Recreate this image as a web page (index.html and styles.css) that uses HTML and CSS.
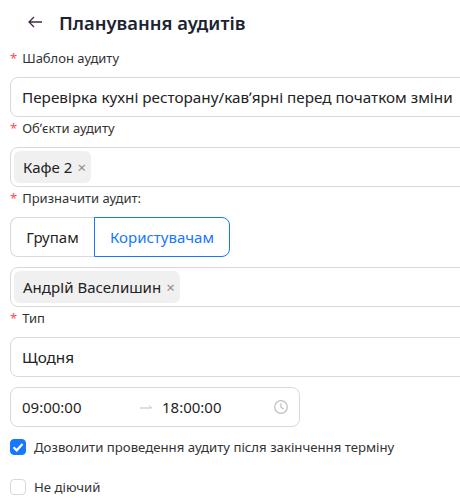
FILE: index.html
```html
<!DOCTYPE html>
<html lang="uk">
<head>
  <meta charset="UTF-8" />
  <title>Планування аудитів</title>
  <link rel="stylesheet" href="styles.css">
</head>
<body>

  <!-- Header -->
  <div class="page-header">
    <svg class="back-icon" viewBox="0 0 14 12" aria-hidden="true">
      <path d="M14 6H1M6 1 1 6l5 5" fill="none" stroke="currentColor" stroke-width="1.3"/>
    </svg>
    <h1>Планування аудитів</h1>
  </div>

  <!-- Form -->
  <div class="form">
    <div class="label">Шаблон аудиту</div>
    <div class="field">Перевірка кухні ресторану/кавʼярні перед початком зміни</div>

    <div class="label">Обʼєкти аудиту</div>
    <div class="field multi">
      <span class="tag">Кафе 2 <span class="tag-close">&times;</span></span>
    </div>

    <div class="label">Призначити аудит:</div>
    <div class="segmented">
      <div class="segment">Групам</div>
      <div class="segment active">Користувачам</div>
    </div>

    <div class="field multi spaced">
      <span class="tag">АндрІй Васелишин <span class="tag-close">&times;</span></span>
    </div>

    <div class="label">Тип</div>
    <div class="field">Щодня</div>

    <div class="time-range">
      <span class="time">09:00:00</span>
      <svg class="range-arrow" viewBox="0 0 12 8" aria-hidden="true">
        <path d="M0 5h11.5L9 2.5" fill="none" stroke="currentColor" stroke-width="1"/>
      </svg>
      <span class="time end">18:00:00</span>
      <svg class="clock-icon" viewBox="0 0 14 14" aria-hidden="true">
        <circle cx="7" cy="7" r="6.3" fill="none" stroke="currentColor" stroke-width="1.2"/>
        <path d="M7 3.2v4l2.6 1.7" fill="none" stroke="currentColor" stroke-width="1.2"/>
      </svg>
    </div>

    <div class="check-row">
      <span class="checkbox checked">
        <svg viewBox="0 0 14 14" aria-hidden="true">
          <path d="M2.5 7.2 5.7 10.3 11.5 4" fill="none" stroke="#fff" stroke-width="2.2"/>
        </svg>
      </span>
      Дозволити проведення аудиту після закінчення терміну
    </div>
    <div class="check-row">
      <span class="checkbox"></span>
      Не діючий
    </div>
  </div>

</body>
</html>
```

FILE: styles.css
```css
* { box-sizing: border-box; }
html, body {
  overflow: hidden;
}
body {
  margin: 0;
  width: 460px;
  height: 504px;
  font-family: 'Noto Sans', 'Open Sans', sans-serif;
  background: #fff;
  color: #1f1f1f;
}
.page-header {
  display: flex;
  align-items: center;
  height: 47px;
  padding: 0 0 3px 28px;
}
.back-icon {
  width: 14px;
  height: 12px;
  color: #3f2a45;
  margin-right: 17px;
}
.page-header h1 {
  margin: 0;
  font-size: 18.4px;
  font-weight: 600;
  color: #1c2430;
}
.form {
  width: 480px;
  padding-left: 10px;
}
.label {
  height: 30px;
  padding-top: 1px;
  font-size: 13px;
  line-height: 20px;
  color: #333;
}
.label::before {
  content: "*";
  color: #ff4d4f;
  margin-right: 5px;
}
.field {
  display: flex;
  align-items: center;
  height: 40px;
  padding: 0 11px;
  border: 1px solid #d9d9d9;
  border-radius: 8px;
  font-size: 15.27px;
  color: #222;
}
.field.multi {
  padding: 0 3px;
}
.field.spaced {
  margin-top: 10px;
}
.tag {
  display: inline-flex;
  align-items: center;
  height: 32px;
  padding: 0 5px 0 9px;
  background: #f0f0f0;
  border-radius: 6px;
  font-size: 15px;
}
.tag-close {
  margin-left: 5px;
  color: #8c8c8c;
  font-size: 15px;
}
.segmented {
  display: flex;
  width: 220px;
  height: 40px;
  font-size: 15px;
}
.segment {
  display: flex;
  align-items: center;
  justify-content: center;
  width: 84px;
  border: 1px solid #d9d9d9;
  border-right: none;
  border-radius: 8px 0 0 8px;
}
.segment.active {
  width: 136px;
  color: #1677ff;
  border: 1px solid #1677ff;
  border-radius: 0 8px 8px 0;
}
.time-range {
  display: flex;
  align-items: center;
  width: 290px;
  height: 40px;
  margin-top: 10px;
  padding: 0 11px;
  border: 1px solid #d9d9d9;
  border-radius: 8px;
  font-size: 15px;
}
.time {
  width: 118px;
  flex-shrink: 0;
}
.time.end {
  width: 100px;
}
.range-arrow {
  width: 12px;
  height: 8px;
  margin-right: 10px;
  flex-shrink: 0;
  color: #bfbfbf;
}
.clock-icon {
  width: 14px;
  height: 14px;
  margin-left: auto;
  color: #bfbfbf;
}
.check-row {
  display: flex;
  align-items: center;
  height: 20px;
  margin-top: 10px;
  font-size: 13.2px;
  color: #333;
}
.check-row + .check-row {
  margin-top: 20px;
}
.checkbox {
  display: inline-block;
  width: 16px;
  height: 16px;
  margin-right: 8px;
  border: 1px solid #d9d9d9;
  border-radius: 4px;
}
.checkbox.checked {
  background: #1677ff;
  border-color: #1677ff;
}
.checkbox svg {
  display: block;
  width: 14px;
  height: 14px;
}
```
